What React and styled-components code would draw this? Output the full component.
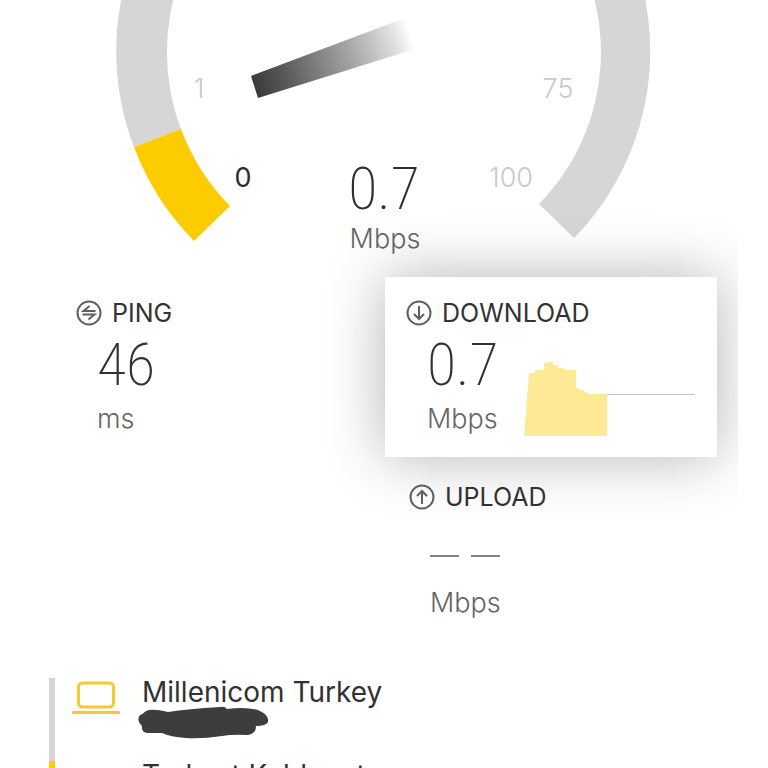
import styled, { createGlobalStyle } from "styled-components";

const GlobalStyle = createGlobalStyle`
    * {
        box-sizing: border-box;
    }

    body {
        margin: 0;
        background: #ffffff;
        color: #323232;
        font-family: Inter, "Open Sans", sans-serif;
    }
`

const Page = styled.main`
    height: 100vh;
    overflow: hidden;
`

const Stage = styled.section`
    margin-right: 30px;
    overflow: hidden;
`

const Gauge = styled.svg`
    display: block;
    width: 100%;
`

const GaugeMark = styled.text`
    font-size: 27px;
    font-weight: ${({$active}) => ($active ? 400 : 300)};
    fill: ${({$active}) => ($active ? '#2b2b2b' : '#c9c9c9')};
    text-anchor: middle;
`

const GaugeValue = styled.text`
    font-family: "Roboto Condensed", "Liberation Sans Narrow", Roboto, sans-serif;
    font-size: 60px;
    font-weight: 200;
    fill: #2e2e2e;
    text-anchor: middle;
`

const GaugeUnit = styled.text`
    font-size: 27px;
    font-weight: 300;
    fill: #666666;
    text-anchor: middle;
`

const Results = styled.div`
    display: grid;
    grid-template-columns: 1fr 332px;
    padding: 17px 21px 59px 76px;
`

const Column = styled.div`
    display: flex;
    flex-direction: column;
`

const Metric = styled.section`
    padding: ${({$inset}) => ($inset ? '24px 0 0 24px' : '20px 0 0')};
`

const Card = styled.div`
    display: flex;
    align-items: flex-end;
    gap: 24px;
    height: 180px;
    padding: 20px 20px 21px 21px;
    background: #ffffff;
    box-shadow: 0 0 60px rgba(0, 0, 0, 0.3);
`

const MetricBody = styled.div`
    align-self: flex-start;
    width: 94px;
`

const MetricTitle = styled.h2`
    display: flex;
    align-items: center;
    gap: 10px;
    height: 32px;
    margin: 0;
    font-size: 25px;
    font-weight: 400;
    white-space: nowrap;

    svg {
        flex: none;
    }
`

const Value = styled.div`
    height: 72px;
    padding-left: 21px;
    font-family: "Roboto Condensed", "Liberation Sans Narrow", Roboto, sans-serif;
    font-size: 60px;
    font-weight: 200;
    line-height: 72px;
    white-space: nowrap;
`

const Unit = styled.div`
    padding: 2px 0 0 21px;
    color: #666666;
    font-size: 27px;
    font-weight: 300;
    line-height: 32px;
`

const Dashes = styled.div`
    display: flex;
    align-items: center;
    gap: 12px;
    height: 72px;
    padding: 14px 0 0 21px;
`

const Dash = styled.span`
    width: 29px;
    height: 2px;
    background: #858585;
`

const Chart = styled.svg`
    flex: none;
    width: 172px;
    height: 76px;
`

const Providers = styled.ul`
    margin: 0 0 0 49px;
    padding: 0;
    list-style: none;
`

const Provider = styled.li`
    display: flex;
    height: 83px;
    border-left: 6px solid ${({color}) => color};
`

const ProviderIcon = styled.div`
    width: 87px;
    padding: 3px 0 0 17px;
`

const ProviderName = styled.div`
    font-size: 28px;
    line-height: 28px;
    white-space: nowrap;
`

const Redacted = styled.svg`
    display: block;
    margin-left: -4px;
`

const CircleIcon = ({children}) => (
    <svg width="26" height="26" viewBox="0 0 26 26" fill="none" stroke="#5f5f5f" strokeWidth="2">
        <circle cx="13" cy="13" r="11.5" />
        {children}
    </svg>
)

const LaptopIcon = () => (
    <svg width="48" height="34" viewBox="0 0 48 34" fill="none" stroke="#f5cb30" strokeWidth="3">
        <rect x="6.5" y="2" width="35" height="24" rx="4" />
        <path d="M0 31.5H48" />
    </svg>
)

const App = () => (
    <>
        <GlobalStyle />
        <Page>
            <Stage>
                <Gauge viewBox="0 0 738 260" role="img" aria-label="Speed gauge">
                    <defs>
                        <linearGradient id="needle" gradientUnits="userSpaceOnUse" x1="254" y1="88" x2="412" y2="37">
                            <stop offset="0" stopColor="#393939" />
                            <stop offset="0.25" stopColor="#626262" />
                            <stop offset="0.6" stopColor="#a3a3a3" />
                            <stop offset="0.88" stopColor="#dedede" />
                            <stop offset="1" stopColor="#ffffff" />
                        </linearGradient>
                    </defs>
                    <path d="M134 147A267 267 0 1 1 574 238L539 204A217 217 0 1 0 181 129Z" fill="#d6d6d6" />
                    <path d="M134 147A267 267 0 0 0 194 241L230 206A217 217 0 0 1 181 129Z" fill="#fccc00" />
                    <path d="M251 76L405 18L415 49L258 98Z" fill="url(#needle)" />
                    <GaugeMark x="199" y="98">1</GaugeMark>
                    <GaugeMark x="558" y="98">75</GaugeMark>
                    <GaugeMark x="243" y="187" $active>0</GaugeMark>
                    <GaugeMark x="511" y="187">100</GaugeMark>
                    <GaugeValue x="384" y="209">0.7</GaugeValue>
                    <GaugeUnit x="385" y="248">Mbps</GaugeUnit>
                </Gauge>
                <Results>
                    <Column>
                        <Metric>
                            <MetricTitle>
                                <CircleIcon>
                                    <path d="M19.5 11H7.5L13.5 6M6.5 14.5H18.5L12.5 19.5" />
                                </CircleIcon>
                                PING
                            </MetricTitle>
                            <Value>46</Value>
                            <Unit>ms</Unit>
                        </Metric>
                    </Column>
                    <Column>
                        <Card>
                            <MetricBody>
                                <MetricTitle>
                                    <CircleIcon>
                                        <path d="M13 6V19M8 14L13 19L18 14" />
                                    </CircleIcon>
                                    DOWNLOAD
                                </MetricTitle>
                                <Value>0.7</Value>
                                <Unit>Mbps</Unit>
                            </MetricBody>
                            <Chart viewBox="0 0 172 76" aria-hidden="true">
                                <path d="M83 34.5H171" stroke="#c2c2c2" />
                                <path d="M0 76L5 13H11V10H20V3H23V2H29V5H34V8H40V10H52V28H55V30H60V32H64V34H83V76Z" fill="#fee997" />
                            </Chart>
                        </Card>
                        <Metric $inset>
                            <MetricTitle>
                                <CircleIcon>
                                    <path d="M13 20V7M8 12L13 7L18 12" />
                                </CircleIcon>
                                UPLOAD
                            </MetricTitle>
                            <Dashes>
                                <Dash />
                                <Dash />
                            </Dashes>
                            <Unit>Mbps</Unit>
                        </Metric>
                    </Column>
                </Results>
            </Stage>
            <Providers>
                <Provider color="#d6d6d6">
                    <ProviderIcon>
                        <LaptopIcon />
                    </ProviderIcon>
                    <div>
                        <ProviderName>Millenicom Turkey</ProviderName>
                        <Redacted width="132" height="34" viewBox="0 0 132 34" aria-hidden="true">
                            <path
                                d="M8 5Q14 2 30 6Q50 3 82 1Q87 0 89 3Q110 0 122 5Q131 9 130 16Q128 20 118 20Q118 28 110 29Q95 28 84 30Q64 33 48 32Q32 31 24 27H11Q3 27 4 20Q-2 14 2 9Q5 8 8 5Z"
                                fill="#3d3d3d"
                            />
                        </Redacted>
                    </div>
                </Provider>
                <Provider color="#fccc00">
                    <ProviderIcon />
                    <ProviderName>Turksat Kablonet</ProviderName>
                </Provider>
            </Providers>
        </Page>
    </>
)

export default App
